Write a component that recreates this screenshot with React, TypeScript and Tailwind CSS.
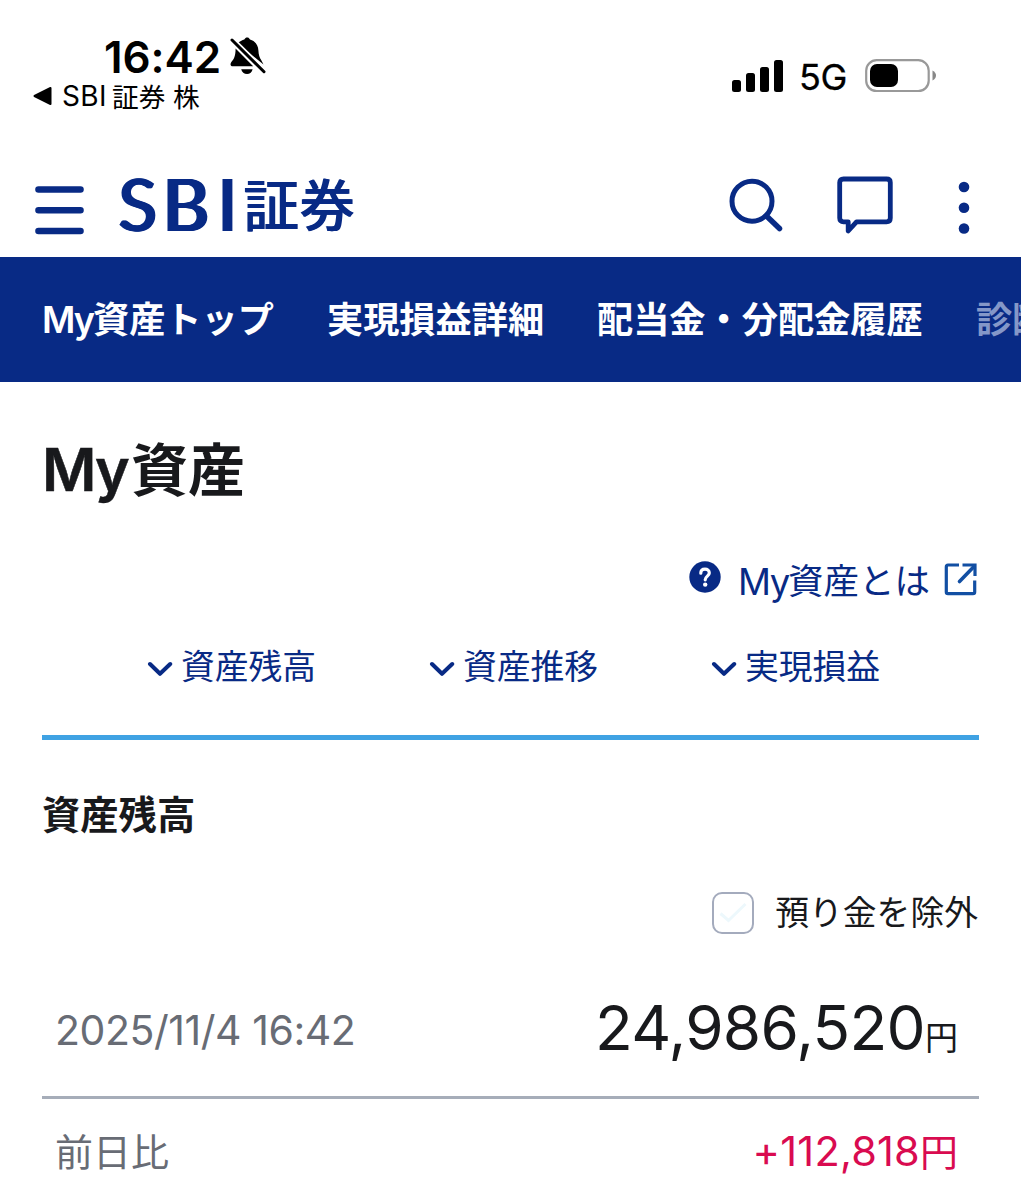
import React from "react";

const navItems = ["実現損益詳細", "配当金・分配金履歴"];
const sections = ["資産残高", "資産推移", "実現損益"];

function BellOff() {
  return (
    <svg className="h-[38px] w-[37px]" viewBox="0 0 37 38" fill="#000">
      <path d="M7.500 6.500C9.500 4.500 12.500 3.200 14.300 2.600C15 1 16 .4 17.200 .4C18.400 .4 19.300 1 20 2.600C25.500 4.300 28.200 8.500 28.400 13.500C28.600 18 29.500 20.500 31.300 23.200L33.500 27.500Z" />
      <path d="M5.600 11.500L23.200 29.300H2.800C.4 29.300 0 27 1.200 25.200C3.800 22.300 5.600 19.500 5.600 11.500Z" />
      <path d="M11.200 32.300H22.600C22 35.200 19.900 37 17 37C14.200 37 11.800 35.200 11.200 32.300Z" />
      <path d="M2 3L34 34.700" stroke="#fff" strokeWidth="6.400" />
      <path d="M2 3L34 34.700" stroke="#000" strokeWidth="3" strokeLinecap="round" />
    </svg>
  );
}

function StatusBar() {
  return (
    <div className="flex h-[150px] justify-between text-black">
      <div className="pt-[34px] pl-[33px]">
        <div className="flex h-[46px] items-start pl-[71px]">
          <span className="w-[126px] pt-px text-[44px] leading-[44px] font-semibold tracking-[-0.100px] whitespace-nowrap">16:42</span>
          <div className="pt-[3px]"><BellOff /></div>
        </div>
        <div className="flex h-[32px] items-center">
          <svg className="h-[20px] w-[20px]" viewBox="0 0 20 20">
            <path d="M1.500 10L17.500 2V18Z" stroke="#000" strokeWidth="2" strokeLinejoin="round" />
          </svg>
          <span className="ml-[9px] w-[50px] text-[28px] leading-[32px] tracking-[0.400px] whitespace-nowrap">SBI</span>
          <span className="pt-[2px] text-[26.700px] leading-[32px] whitespace-nowrap">証券 株</span>
        </div>
      </div>
      <div className="mt-[59px] flex h-[33px] items-center pr-[85px]">
        <div className="flex h-[32px] items-end gap-[5.300px]">
          <i className="h-[12px] w-[8.700px] rounded-[2.500px] bg-black" />
          <i className="h-[18.500px] w-[8.700px] rounded-[2.500px] bg-black" />
          <i className="h-[25px] w-[8.700px] rounded-[2.500px] bg-black" />
          <i className="h-[32px] w-[8.700px] rounded-[2.500px] bg-black" />
        </div>
        <span className="ml-[16px] w-[66px] pt-[4px] text-[36px] leading-[33px] font-normal tracking-[-0.300px] [-webkit-text-stroke:0.300px_#000]">5G</span>
        <svg className="h-[33px] w-[71px]" viewBox="0 0 71 33">
          <rect x="1.200" y="1.200" width="62.500" height="31" rx="10.500" fill="none" stroke="#999" strokeWidth="2.200" />
          <rect x="5" y="5" width="28" height="23" rx="7" fill="#000" />
          <path d="M67.500 11.500Q71 13.500 71 16.500T67.500 21.500Z" fill="#888" />
        </svg>
      </div>
    </div>
  );
}

function Header() {
  return (
    <header className="flex h-[107px] text-[#082a85]">
      <svg className="mt-[34px] ml-[35px] h-[53px] w-[49px]" viewBox="0 0 49 53" stroke="currentColor" strokeWidth="6.600" strokeLinecap="round">
        <path d="M3.500 5.500H45.500M3.500 26.200H45.500M3.500 47H45.500" />
      </svg>
      <div className="mt-[18px] ml-[32px] flex h-[72px] w-[242px] font-['Lato'] text-[71px] leading-[72px] font-normal">
        <span className="w-[44px] pl-px [text-shadow:1px_0_0_#082a85,2px_0_0_#082a85,3px_0_0_#082a85]">S</span>
        <span className="w-[55px] pl-px [text-shadow:1px_0_0_#082a85,2px_0_0_#082a85,3px_0_0_#082a85,4px_0_0_#082a85]">B</span>
        <span className="w-[32px] pl-px [text-shadow:1px_0_0_#082a85,2px_0_0_#082a85,3px_0_0_#082a85]">I</span>
        <span className="-mt-[2px] -ml-[4px] font-['Noto_Sans_CJK_JP'] text-[55.500px] tracking-[0.500px] font-medium whitespace-nowrap [text-shadow:1px_0_0_#082a85]">証券</span>
      </div>
      <svg className="mt-[26px] ml-[370px] h-[60px] w-[60px]" viewBox="0 0 60 60" fill="none" stroke="currentColor" strokeWidth="5" strokeLinecap="round">
        <circle cx="24" cy="25.200" r="20" />
        <path d="M38.500 40L51.500 52.500" strokeWidth="5.500" />
      </svg>
      <svg className="mt-[24px] ml-[48px] h-[62px] w-[60px]" viewBox="0 0 60 62" fill="none" stroke="currentColor" strokeWidth="4.800" strokeLinejoin="round">
        <path d="M7.500 5H50.500Q54.300 5 54.300 8.500V44Q54.300 47.800 50.500 47.800H20.500L12.200 57V47.800H7.500Q3.700 47.800 3.700 44V8.500Q3.700 5 7.500 5Z" />
      </svg>
      <svg className="mt-[30px] ml-[60px] h-[55px] w-[20px]" viewBox="0 0 20 55" fill="currentColor">
        <circle cx="8" cy="7" r="5.300" /><circle cx="8" cy="27.700" r="5.300" /><circle cx="8" cy="48.500" r="5.300" />
      </svg>
    </header>
  );
}

function Chevron() {
  return (
    <svg className="mt-[3px] mr-[8px] h-[16px] w-[26px] shrink-0" viewBox="0 0 26 16" fill="none" stroke="#082a85" strokeWidth="4" strokeLinecap="round" strokeLinejoin="round">
      <path d="M3 3L13 12.800L23.200 3" />
    </svg>
  );
}

export default function App() {
  return (
    <div className="h-[1200px] w-[1021px] overflow-hidden bg-white font-['Inter','Noto_Sans_CJK_JP',sans-serif] text-[#18191c]">
      <StatusBar />
      <Header />
      <nav className="flex h-[125px] overflow-hidden bg-[#082a85] pt-[41px] pl-[42px] text-[36.200px] leading-[44px] font-bold whitespace-nowrap text-white">
        <span className="w-[285px] shrink-0"><span className="font-semibold tracking-[-2px]">My</span>資産トップ</span>
        <span className="w-[270px] shrink-0">{navItems[0]}</span>
        <span className="w-[379px] shrink-0">{navItems[1]}</span>
        <span className="text-[#8497c8]">診断</span>
      </nav>
      <main className="px-[42px]">
        <h1 className="flex h-[176px] pt-[53px] text-[57px] leading-[70px] font-bold whitespace-nowrap">
          <span className="w-[89px] text-[59px] tracking-[-2px] font-semibold [-webkit-text-stroke:0.500px_#18191c]">My</span>
          <span className="pt-px">資産</span>
        </h1>
        <div className="flex h-[46px] items-center justify-end text-[#082a85]">
          <svg className="-mt-[8px] mr-[17px] h-[32px] w-[32px]" viewBox="0 0 32 32">
            <circle cx="16" cy="16" r="15.700" fill="#082a85" />
            <path d="M11.800 12.200C11.800 9.600 13.500 8.200 16 8.200C18.500 8.200 20.300 9.700 20.300 12C20.300 15 16.200 15.300 16.200 18.800" fill="none" stroke="#fff" strokeWidth="3.200" strokeLinecap="round" />
            <circle cx="16.200" cy="23.600" r="2.200" fill="#fff" />
          </svg>
          <span className="flex w-[206px] pt-[2px] text-[35.500px] leading-[46px] whitespace-nowrap">
            <span className="w-[50px] text-[36.500px] tracking-[-1.500px]">My</span>資産とは
          </span>
          <svg className="-mt-[3px] mr-[2px] h-[33px] w-[33px]" viewBox="0 0 33 33" fill="none" stroke="#124fa3" strokeWidth="3.200">
            <path d="M15 2H4Q2.300 2 2.300 4V29Q2.300 30.700 4 30.700H29Q30.700 30.700 30.700 29V17.500M18.500 2H31V13" />
            <path d="M15.500 18.500L30 3.500" strokeWidth="3.600" strokeLinecap="round" />
          </svg>
        </div>
        <div className="ml-[48.500px] grid h-[131px] w-[846px] grid-cols-3 pt-[40px]">
          {sections.map((s) => (
            <a key={s} className="flex h-[46px] items-center justify-center text-[33.800px] leading-[46px] whitespace-nowrap text-[#082a85]">
              <Chevron />{s}
            </a>
          ))}
        </div>
        <div className="h-[5px] bg-[#3fa2e3]" />
        <h2 className="flex h-[146px] pt-[51px] text-[38.300px] leading-[48px] font-bold">資産残高</h2>
        <label className="flex h-[54px] items-center justify-end text-[33.800px] leading-[48px]">
          <span className="mr-[22px] flex h-[42px] w-[42px] items-center justify-center rounded-[10px] border-[2.500px] border-[#a4abbd]">
            <svg className="h-[22px] w-[28px]" viewBox="0 0 28 22" fill="none" stroke="#edf8fc" strokeWidth="3">
              <path d="M1.500 11.500L9.500 18.500L26.500 2" />
            </svg>
          </span>
          <span className="mr-px -ml-px">預り金を除外</span>
        </label>
        <div className="flex h-[159px] justify-between border-b-[3px] border-[#a6adb9] pr-[21px] pl-[13px]">
          <span className="pt-[62px] text-[41px] leading-[56px] tracking-[-0.450px] whitespace-nowrap text-[#686c75]">2025/11/4 16:42</span>
          <span className="flex items-baseline pt-[50px] leading-[76px] whitespace-nowrap">
            <span className="text-[62px] tracking-[-0.700px]">24,986,520</span>
            <span className="text-[33px]">円</span>
          </span>
        </div>
        <div className="flex h-[100px] justify-between pt-[24px] pr-[21px] pl-[13px] leading-[56px] whitespace-nowrap">
          <span className="pt-px text-[38px] text-[#686c75]">前日比</span>
          <span className="flex items-baseline text-[41.500px] text-[#d90b50]"><span className="tracking-[0.200px]">+112,818</span><span className="text-[38px]">円</span></span>
        </div>
      </main>
    </div>
  );
}
